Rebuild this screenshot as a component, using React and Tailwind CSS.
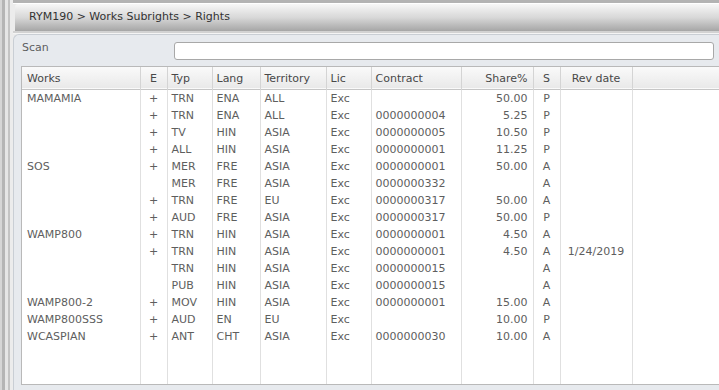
import React from "react";

const cols = [
  { key: "works", label: "Works", w: "w-[118px]", align: "text-left pl-[5px]" },
  { key: "e", label: "E", w: "w-[27px]", align: "text-center" },
  { key: "typ", label: "Typ", w: "w-[45px]", align: "text-left pl-[4px]" },
  { key: "lang", label: "Lang", w: "w-[48px]", align: "text-left pl-[4px]" },
  { key: "terr", label: "Territory", w: "w-[66px]", align: "text-left pl-[4px]" },
  { key: "lic", label: "Lic", w: "w-[45px]", align: "text-left pl-[4px]" },
  { key: "contract", label: "Contract", w: "w-[90px]", align: "text-left pl-[4px]" },
  { key: "share", label: "Share%", w: "w-[72px]", align: "text-right pr-[5px]" },
  { key: "s", label: "S", w: "w-[27px]", align: "text-center" },
  { key: "rev", label: "Rev date", w: "w-[72px]", align: "text-center" },
  { key: "rest", label: "", w: "", align: "" },
];

const rows = [
  ["MAMAMIA", "+", "TRN", "ENA", "ALL", "Exc", "", "50.00", "P", ""],
  ["", "+", "TRN", "ENA", "ALL", "Exc", "0000000004", "5.25", "P", ""],
  ["", "+", "TV", "HIN", "ASIA", "Exc", "0000000005", "10.50", "P", ""],
  ["", "+", "ALL", "HIN", "ASIA", "Exc", "0000000001", "11.25", "P", ""],
  ["SOS", "+", "MER", "FRE", "ASIA", "Exc", "0000000001", "50.00", "A", ""],
  ["", "", "MER", "FRE", "ASIA", "Exc", "0000000332", "", "A", ""],
  ["", "+", "TRN", "FRE", "EU", "Exc", "0000000317", "50.00", "A", ""],
  ["", "+", "AUD", "FRE", "ASIA", "Exc", "0000000317", "50.00", "P", ""],
  ["WAMP800", "+", "TRN", "HIN", "ASIA", "Exc", "0000000001", "4.50", "A", ""],
  ["", "+", "TRN", "HIN", "ASIA", "Exc", "0000000001", "4.50", "A", "1/24/2019"],
  ["", "", "TRN", "HIN", "ASIA", "Exc", "0000000015", "", "A", ""],
  ["", "", "PUB", "HIN", "ASIA", "Exc", "0000000015", "", "A", ""],
  ["WAMP800-2", "+", "MOV", "HIN", "ASIA", "Exc", "0000000001", "15.00", "A", ""],
  ["WAMP800SSS", "+", "AUD", "EN", "EU", "Exc", "", "10.00", "P", ""],
  ["WCASPIAN", "+", "ANT", "CHT", "ASIA", "Exc", "0000000030", "10.00", "A", ""],
];

export default function App() {
  return (
    <div className="w-[719px] h-[390px] overflow-hidden flex bg-[#ececec] font-['DejaVu_Sans',sans-serif] text-[11px] text-[#5e5e5e]">
      {/* left frame strip */}
      <div className="flex h-full shrink-0">
        <div className="w-[2px] bg-[#d6d6d6]" />
        <div className="w-[3px] bg-[#b5b5b5]" />
        <div className="w-[3px] bg-[#e6e6e6]" />
        <div className="w-[2px] bg-[#c4c4c4]" />
        <div className="w-[3px] bg-[#ececec]" />
      </div>

      <div className="flex-1 flex flex-col min-w-0 h-full">
        <div className="h-[3px] shrink-0 bg-[#b3b3b3]" />
        <div className="h-[1px] shrink-0 bg-white" />
        <div className="h-[27px] shrink-0 ml-[2px] flex items-center pl-[14px] rounded-tl-[3px] bg-gradient-to-b from-[#f7f7f7] via-[#d8d8d8] to-[#a6a6a6] text-[#333]">
          RYM190 &gt; Works Subrights &gt; Rights
        </div>
        <div className="h-[2px] shrink-0 bg-[#d2d2d2]" />
        <div className="h-[1px] shrink-0 bg-[#f4f4f4]" />

        {/* panel */}
        <div className="flex-1 min-h-0 flex flex-col bg-[#e7eaee] border-l border-t border-[#c9ced4] rounded-tl-[6px] pl-[7px] pt-[7px]">
          <div className="flex items-center h-[18px] shrink-0 mr-[5px]">
            <div className="w-[153px] pl-[1px] -mt-[5px]">Scan</div>
            <div className="flex-1 h-[18px] bg-white border border-[#a8a8a8] rounded-[3px]" />
          </div>

          <div className="mt-[6px] flex-1 min-h-0 -mr-[10px] bg-white border-l border-t border-b border-[#b9b9b9] overflow-hidden">
            <table className="w-full table-fixed border-collapse">
              <colgroup>
                {cols.map((c) => (
                  <col key={c.key} className={c.w} />
                ))}
              </colgroup>
              <thead>
                <tr className="h-[22px] bg-gradient-to-b from-[#fafafa] to-[#e9e9e9] border-b border-[#c6c6c6] text-[#484848]">
                  {cols.map((c, i) => (
                    <th
                      key={c.key}
                      className={`font-normal pt-[3px] ${c.align} ${i > 0 ? "border-l border-[#d4d4d4]" : ""}`}
                    >
                      {c.label}
                    </th>
                  ))}
                </tr>
              </thead>
              <tbody>
                <tr className="h-[1px]">
                  {cols.map((c, i) => (
                    <td key={c.key} className={i > 0 ? "border-l border-[#e0e0e0]" : ""} />
                  ))}
                </tr>
                {rows.map((r, ri) => (
                  <tr key={ri} className="h-[17px] leading-[17px]">
                    {cols.map((c, i) => (
                      <td
                        key={c.key}
                        className={`${c.align} whitespace-nowrap overflow-hidden ${i > 0 ? "border-l border-[#e0e0e0]" : ""}`}
                      >
                        {r[i] || ""}
                      </td>
                    ))}
                  </tr>
                ))}
                <tr className="h-[60px]">
                  {cols.map((c, i) => (
                    <td key={c.key} className={i > 0 ? "border-l border-[#e0e0e0]" : ""} />
                  ))}
                </tr>
              </tbody>
            </table>
          </div>
          <div className="h-[5px] shrink-0" />
        </div>
      </div>
    </div>
  );
}
